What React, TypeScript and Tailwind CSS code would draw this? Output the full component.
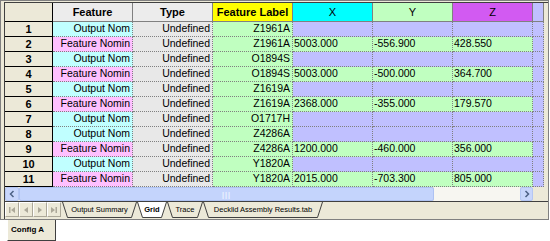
import React from "react"

type Row = { n: number; kind: "out" | "feat"; label: string; x?: string; y?: string; z?: string }

const rows: Row[] = [
  { n: 1, kind: "out", label: "Z1961A" },
  { n: 2, kind: "feat", label: "Z1961A", x: "5003.000", y: "-556.900", z: "428.550" },
  { n: 3, kind: "out", label: "O1894S" },
  { n: 4, kind: "feat", label: "O1894S", x: "5003.000", y: "-500.000", z: "364.700" },
  { n: 5, kind: "out", label: "Z1619A" },
  { n: 6, kind: "feat", label: "Z1619A", x: "2368.000", y: "-355.000", z: "179.570" },
  { n: 7, kind: "out", label: "O1717H" },
  { n: 8, kind: "out", label: "Z4286A" },
  { n: 9, kind: "feat", label: "Z4286A", x: "1200.000", y: "-460.000", z: "356.000" },
  { n: 10, kind: "out", label: "Y1820A" },
  { n: 11, kind: "feat", label: "Y1820A", x: "2015.000", y: "-703.300", z: "805.000" },
]

const tabs = [
  { name: "Output Summary", w: 75, active: false },
  { name: "Grid", w: 30, active: true },
  { name: "Trace", w: 36, active: false },
  { name: "Decklid Assembly Results.tab", w: 120, active: false },
]

function Tab({ name, w, active }: { name: string; w: number; active: boolean }) {
  return (
    <div className="relative h-[16px] shrink-0 flex items-center justify-center" style={{ width: w }}>
      <svg className="absolute inset-0" width={w} height={16}>
        <polygon points={`0.5,0 5.5,15.5 ${w - 5.5},15.5 ${w - 0.5},0`} fill={active ? "#ffffff" : "#ECE9D8"} stroke="none" />
        <polyline points={`0.5,0 5.5,15.5 ${w - 5.5},15.5 ${w - 0.5},0`} fill="none" stroke="#404040" strokeWidth="1" />
      </svg>
      <span className={`relative text-[7.5px] leading-none ${active ? "font-bold" : ""}`}>{name}</span>
    </div>
  )
}

function NavBtn({ d }: { d: string }) {
  return (
    <div className="w-[14px] h-[15px] shrink-0 border border-t-white border-l-white border-r-[#ACA899] border-b-[#ACA899] flex items-center justify-center">
      <svg width="8" height="8" viewBox="0 0 8 8">
        <path d={d} fill="#ACA899" />
      </svg>
    </div>
  )
}

export default function App() {
  const cell = "w-[80px] shrink-0 border-r border-b border-dotted border-[#808080] flex items-center overflow-hidden whitespace-nowrap"
  return (
    <div className="w-[550px] h-[241px] bg-white font-['Liberation_Sans',Arial,sans-serif] text-black">
      <div className="w-[549px] h-[220px] border border-[#808080] bg-[#ECE9D8] pl-[3px] pt-[1px] flex flex-col">
        <div className="flex flex-col border-t border-l border-[#404040] flex-1">
          {/* header row */}
          <div className="flex h-[19px] text-[11px]">
            <div className="w-[48px] shrink-0 bg-[#ECE9D8] border-r border-b border-black" />
            <div className="w-[80px] shrink-0 bg-[#ECECEC] border-r border-b border-[#808080] font-bold flex items-center justify-center">Feature</div>
            <div className="w-[80px] shrink-0 bg-[#ECECEC] border-r border-b border-[#808080] font-bold flex items-center justify-center">Type</div>
            <div className="w-[80px] shrink-0 bg-[#FFFF00] border-r border-b border-[#808080] font-bold flex items-center justify-center">Feature Label</div>
            <div className="w-[80px] shrink-0 bg-[#00FFFF] border-r border-b border-[#808080] flex items-center justify-center">X</div>
            <div className="w-[80px] shrink-0 bg-[#C0FFC0] border-r border-b border-[#808080] flex items-center justify-center">Y</div>
            <div className="w-[80px] shrink-0 bg-[#D25AF2] border-r border-b border-[#808080] flex items-center justify-center">Z</div>
            <div className="w-[11px] shrink-0 bg-[#C0C0FF] border-r border-b border-[#808080]" />
          </div>

          {rows.map((r) => {
            const has = r.x !== undefined
            const xyz = has ? "bg-[#C0FFC0]" : "bg-[#C0C0FF]"
            return (
              <div key={r.n} className="flex h-[15px] text-[10.5px]">
                <div className="w-[48px] shrink-0 bg-[#ECE9D8] border-r border-b border-black font-bold text-[11px] flex items-center justify-center">{r.n}</div>
                <div className={`${cell} justify-end pr-[2px] ${r.kind === "out" ? "bg-[#C0FFFF]" : "bg-[#FFC0FF]"}`}>
                  {r.kind === "out" ? "Output Nom" : "Feature Nomin"}
                </div>
                <div className={`${cell} justify-end pr-[2px] bg-[#E8E8E8]`}>Undefined</div>
                <div className={`${cell} justify-end pr-[2px] bg-[#C0FFC0]`}>{r.label}</div>
                <div className={`${cell} pl-[1px] ${xyz}`}>{r.x}</div>
                <div className={`${cell} pl-[1px] ${xyz}`}>{r.y}</div>
                <div className={`${cell} pl-[1px] ${xyz}`}>{r.z}</div>
                <div className="w-[11px] shrink-0 bg-[#C0C0FF] border-r border-b border-dotted border-[#808080]" />
              </div>
            )
          })}

          {/* horizontal scrollbar */}
          <div className="flex h-[14px]">
            <div className="w-[14px] shrink-0 bg-[#C8D6FB] border border-[#B4C6F3] rounded-[2px] flex items-center justify-center">
              <svg width="6" height="8" viewBox="0 0 6 8">
                <path d="M4.5 1 L1.5 4 L4.5 7" fill="none" stroke="#4D6185" strokeWidth="1.5" />
              </svg>
            </div>
            <div className="w-[415px] shrink-0 bg-[#C4D4FC] border border-[#AEC2F2] rounded-[2px] flex items-center justify-center">
              <span className="text-[7px] leading-none tracking-[1px] text-[#EEF3FE] font-bold">|||</span>
            </div>
            <div className="w-[86px] shrink-0 bg-[#F7F6F1]" />
            <div className="w-[13px] shrink-0 bg-[#C8D6FB] border border-[#B4C6F3] rounded-[2px] flex items-center justify-center">
              <svg width="6" height="8" viewBox="0 0 6 8">
                <path d="M1.5 1 L4.5 4 L1.5 7" fill="none" stroke="#4D6185" strokeWidth="1.5" />
              </svg>
            </div>
          </div>

          {/* sheet tabs */}
          <div className="flex h-[17px] border-t border-[#404040] bg-[#ECE9D8]">
            <NavBtn d="M1 1h1.5v6H1z M7 1 L3 4 L7 7z" />
            <NavBtn d="M6 1 L2 4 L6 7z" />
            <NavBtn d="M2 1 L6 4 L2 7z" />
            <NavBtn d="M1 1 L5 4 L1 7z M5.5 1H7v6H5.5z" />
            <div className="w-[1px] shrink-0" />
            {tabs.map((t) => (
              <Tab key={t.name} {...t} />
            ))}
          </div>
        </div>
      </div>

      <div className="ml-[7px] w-[49px] h-[21px] bg-[#ECE9D8] border-l border-l-white border-r border-b border-[#404040] flex items-center pl-[3px]">
        <span className="text-[8px] font-bold leading-none">Config A</span>
      </div>
    </div>
  )
}
